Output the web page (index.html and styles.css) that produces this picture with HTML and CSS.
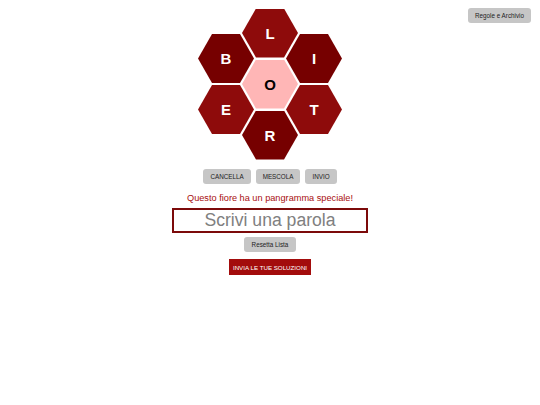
FILE: index.html
```html
<!DOCTYPE html>
<html lang="it">
<head>
<meta charset="utf-8">
<title>Fiore</title>
<link rel="stylesheet" href="styles.css">
</head>
<body>
<button class="btn rules">Regole e Archivio</button>
<main class="game">
  <div class="hive">
    <div class="hex light pos-top">L</div>
    <div class="hex dark pos-ul">B</div>
    <div class="hex dark pos-ur">I</div>
    <div class="hex center pos-mid">O</div>
    <div class="hex light pos-ll">E</div>
    <div class="hex light pos-lr">T</div>
    <div class="hex dark pos-bot">R</div>
  </div>
  <div class="controls">
    <button class="btn">CANCELLA</button>
    <button class="btn">MESCOLA</button>
    <button class="btn">INVIO</button>
  </div>
  <p class="notice">Questo fiore ha un pangramma speciale!</p>
  <input class="word" type="text" placeholder="Scrivi una parola">
  <button class="btn reset">Resetta Lista</button>
  <button class="submit">INVIA LE TUE SOLUZIONI</button>
</main>
</body>
</html>
```
FILE: styles.css
```css
html, body {
  margin: 0;
  padding: 0;
  background: #fff;
  font-family: "Liberation Sans", Arial, sans-serif;
}
.rules {
  position: absolute;
  top: 8px;
  right: 9px;
  height: 16px;
  padding: 0 7px;
}
.game {
  display: flex;
  flex-direction: column;
  align-items: center;
  padding-top: 8px;
}
.hive {
  position: relative;
  width: 146px;
  height: 152px;
}
.hex {
  position: absolute;
  width: 56px;
  height: 49px;
  clip-path: polygon(25% 0, 75% 0, 100% 50%, 75% 100%, 25% 100%, 0 50%);
  display: flex;
  align-items: center;
  justify-content: center;
  font-weight: bold;
  font-size: 15px;
  color: #fff;
}
.light { background: #8e0b0b; }
.dark { background: #760000; }
.center { background: #ffb6b6; color: #000; }
.pos-top { left: 45px; top: 0.5px; }
.pos-ul { left: 1px; top: 26px; }
.pos-ur { left: 89px; top: 26px; }
.pos-mid { left: 45px; top: 51.5px; }
.pos-ll { left: 1px; top: 77px; }
.pos-lr { left: 89px; top: 77px; }
.pos-bot { left: 45px; top: 102.5px; }
.btn {
  font-family: "Liberation Sans", Arial, sans-serif;
  font-size: 6.3px;
  color: #222;
  background: #c6c6c6;
  border: none;
  border-radius: 3px;
  padding: 0 7px;
  height: 15px;
  line-height: 15px;
}
.controls {
  display: flex;
  gap: 5px;
  margin-top: 9px;
}
.notice {
  margin: 8px 0 0;
  font-size: 9.2px;
  line-height: 12px;
  color: #a80e0e;
}
.word {
  box-sizing: border-box;
  width: 196px;
  height: 25px;
  margin-top: 4px;
  border: 2px solid #7c0a0a;
  padding: 0;
  text-align: center;
  font-family: "Liberation Sans", Arial, sans-serif;
  font-size: 17.6px;
  outline: none;
}
.word::placeholder {
  color: #808080;
}
.reset {
  margin-top: 4px;
  padding: 0 8px;
}
.submit {
  margin-top: 7px;
  font-family: "Liberation Sans", Arial, sans-serif;
  font-size: 6.2px;
  color: #fff;
  background: #a30c0c;
  border: none;
  height: 16px;
  padding: 0 4px;
}
```
